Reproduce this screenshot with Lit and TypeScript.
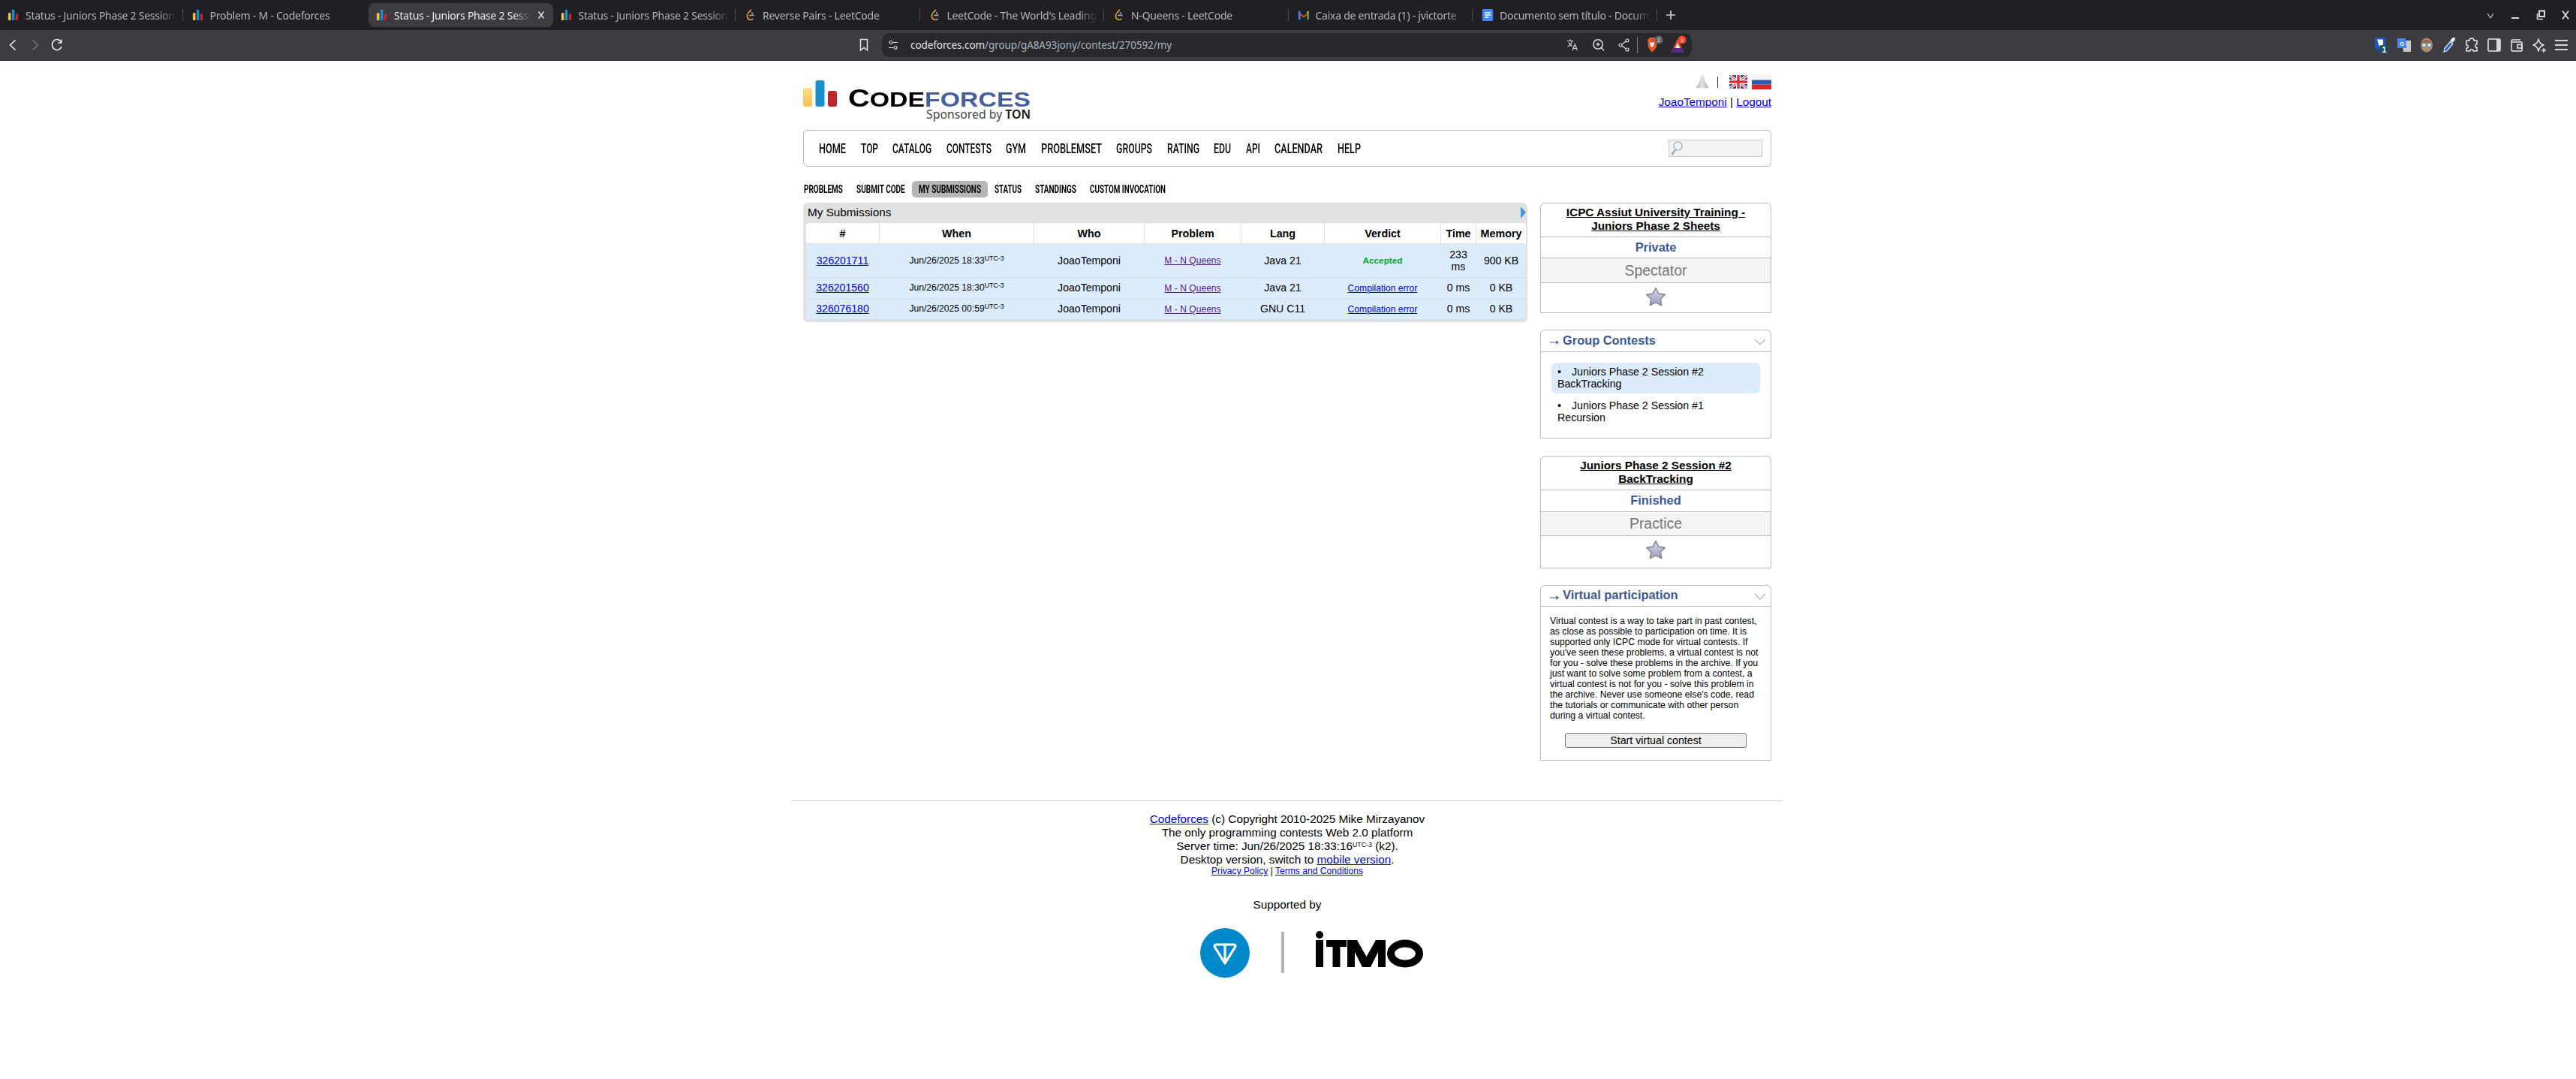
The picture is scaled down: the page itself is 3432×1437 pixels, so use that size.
import { LitElement, html, css, svg } from "lit";
import { customElement } from "lit/decorators.js";

const ctx = document.createElement("canvas").getContext("2d")!;
const measure = (t: string, font: string) => {
  ctx.font = font;
  return ctx.measureText(t).width;
};
const NAV_FONT = '500 18px Roboto';
const SUB_FONT = 'bold 14px Roboto';

const cfIcon = svg`<rect x="1" y="6" width="4" height="11" rx="1" fill="#f6c344"/><rect x="6.500" y="1" width="4" height="16" rx="1" fill="#1a8fd0"/><rect x="12" y="7" width="4" height="10" rx="1" fill="#c0272d"/>`;
const lcIcon = svg`<path d="M10 1 5 6.500M5 7c-2.500 3-1 7 2 9h4" fill="none" stroke="#e8a33a" stroke-width="1.800"/><path d="M7 9.500h7" stroke="#b3b3b3" stroke-width="1.800"/><path d="M10 5l3 2.500M11 16l2-1.500" stroke="#e0e0e0" stroke-width="1.200"/>`;
const gmIcon = svg`<path d="M1 4.500 9 10l8-5.500V7l-8 6-8-6z" fill="#ea4335"/><path d="M1 4.500a1.500 1.500 0 0 1 3-.5v12H2a1 1 0 0 1-1-1z" fill="#4285f4"/><path d="M14 16V4a1.500 1.500 0 0 1 3 .5V15a1 1 0 0 1-1 1z" fill="#34a853"/><path d="M14 4l3 .5L14 7z" fill="#fbbc04"/>`;
const docIcon = svg`<rect x="1" y="0" width="16" height="18" rx="2" fill="#4285f4"/><path d="M4.500 5.500h9M4.500 9h9M4.500 12.500h6" stroke="#fff" stroke-width="1.700"/>`;

const TABS = [
  { t: "Status - Juniors Phase 2 Session", i: cfIcon },
  { t: "Problem - M - Codeforces", i: cfIcon },
  { t: "Status - Juniors Phase 2 Session", i: cfIcon, active: true },
  { t: "Status - Juniors Phase 2 Session", i: cfIcon },
  { t: "Reverse Pairs - LeetCode", i: lcIcon },
  { t: "LeetCode - The World's Leading", i: lcIcon },
  { t: "N-Queens - LeetCode", i: lcIcon },
  { t: "Caixa de entrada (1) - jvictorte", i: gmIcon },
  { t: "Documento sem título - Docum", i: docIcon },
];

const NAV: [string, number][] = [
  ["HOME", 36], ["TOP", 23], ["CATALOG", 52], ["CONTESTS", 60], ["GYM", 27], ["PROBLEMSET", 81],
  ["GROUPS", 48], ["RATING", 43], ["EDU", 23], ["API", 19], ["CALENDAR", 64], ["HELP", 31],
];
const SUB: [string, number, boolean?][] = [
  ["PROBLEMS", 52], ["SUBMIT CODE", 65], ["MY SUBMISSIONS", 83, true], ["STATUS", 36], ["STANDINGS", 55], ["CUSTOM INVOCATION", 101],
];

const ROWS = [
  { id: "326201711", when: "Jun/26/2025 18:33", lang: "Java 21", ok: true, time: "233 ms", mem: "900 KB" },
  { id: "326201560", when: "Jun/26/2025 18:30", lang: "Java 21", ok: false, time: "0 ms", mem: "0 KB" },
  { id: "326076180", when: "Jun/26/2025 00:59", lang: "GNU C11", ok: false, time: "0 ms", mem: "0 KB" },
];

const star = svg`<svg class="star" viewBox="0 0 28 26"><defs><linearGradient id="sg" x1="0" y1="0" x2="0" y2="1"><stop offset="0" stop-color="#d8d8e2"/><stop offset="1" stop-color="#9c9cc6"/></linearGradient></defs><path d="M14 1.500l3.900 7.600 8.400 1.300-6 5.900 1.400 8.300L14 20.700l-7.700 3.900 1.400-8.300-6-5.900 8.400-1.300z" fill="url(#sg)" stroke="#8a8a92" stroke-width="1.600" stroke-linejoin="round"/></svg>`;
const chevron = svg`<svg class="chev" width="16" height="10" viewBox="0 0 16 10"><path d="M1 1l7 7 7-7" fill="none" stroke="#aab0b8" stroke-width="1.200"/></svg>`;
const arrow = svg`<svg class="ar" width="18" height="8" viewBox="0 0 18 8"><path d="M1 4h10M9 2l3 2-3 2" fill="none" stroke="#3b5998" stroke-width="1.100"/></svg>`;

@customElement("app-root")
export class AppRoot extends LitElement {
  static styles = css`
    :host { display: block; height: 1437px; background: #fff; color: #000; font-family: "Liberation Sans", Arial, sans-serif; overflow: hidden; }
    a { color: #0000ee; }
    .tabbar { height: 40px; background: #1f1f24; display: flex; align-items: flex-start; box-sizing: border-box; padding: 4px 0 0 0; }
    .tab { width: 245.500px; height: 32px; flex: none; box-sizing: border-box; padding: 0 11px 0 10px; display: flex; align-items: center; gap: 8px; color: #b6b6ba; font: 14px "Noto Sans", sans-serif; position: relative; }
    .tab.active { background: #3c3c42; border-radius: 8px; color: #ececec; padding-right: 10px; }
    .tab svg { width: 16px; height: 18px; flex: none; }
    .tab span { flex: 1; overflow: hidden; white-space: nowrap; -webkit-mask-image: linear-gradient(90deg, #000 88%, transparent); mask-image: linear-gradient(90deg, #000 88%, transparent); letter-spacing: -0.25px; }
    .tab .x { width: 12px; height: 12px; }
    .tab.sep::after { content: ""; position: absolute; right: 2px; top: 8px; height: 16px; width: 1px; background: #4a4a50; }
    .plus { width: 14px; height: 14px; margin: 9px 0 0 9px; flex: none; }
    .winctl { margin-left: auto; display: flex; align-items: center; gap: 19.500px; height: 32px; padding-right: 7px; }
    .winctl svg { width: 14px; height: 14px; display: block; }
    .toolbar { height: 41px; background: #3c3c42; border-bottom: 1px solid #26262a; box-sizing: border-box; display: flex; align-items: center; padding: 0 0 0 11px; }
    .toolbar svg { display: block; }
    .nav-ic { display: flex; gap: 18px; align-items: center; width: 1164px; flex: none; }
    .nav-ic .rl { margin-left: -3px; }
    .nav-ic .bm { margin-left: auto; margin-right: 17px; }
    .addr { width: 1079px; height: 32px; background: #28282d; border-radius: 10px; box-sizing: border-box; display: flex; align-items: center; padding: 0 6px 0 8px; color: #a9b3bd; font: 13.500px "Noto Sans", sans-serif; letter-spacing: -0.08px; flex: none; }
    .addr .h { color: #e6e6e6; }
    .addr .tune { margin-right: 16px; }
    .addr .right { margin-left: auto; display: flex; align-items: center; gap: 18px; }
    .addr .vsep { width: 1px; height: 22px; background: #77777c; margin: 0 -8px; }
    .addr .bat { margin-left: -10px; }
    .exts { margin-left: auto; display: flex; align-items: center; gap: 10px; padding-right: 9px; }
    .exts svg { width: 20px; height: 24px; }

    .page { width: 1290px; margin: 0 auto; transform: translateX(-1px); }
    .head { display: flex; justify-content: space-between; height: 92px; box-sizing: border-box; padding-top: 26px; }
    .logo { display: flex; gap: 15px; height: 54px; }
    .logo svg { width: 45px; height: 35px; display: block; }
    .logo-col { width: 243px; }
    .logo-txt { margin-top: 10px; height: 27px; font: 700 28px/27px "Liberation Sans", sans-serif; white-space: nowrap; transform-origin: 0 50%; }
    .logo-txt .c { font-size: 33px; }
    .logo-txt .f { color: #45609d; }
    .spons { font: 15.800px/17px "Noto Sans", sans-serif; color: #444; text-align: right; white-space: nowrap; }
    .spons b { color: #111; font-weight: 600; }
    .who { text-align: right; font-size: 15.300px; margin-top: -7px; }
    .icons { display: flex; justify-content: flex-end; align-items: center; height: 18px; margin-bottom: 9px; gap: 6px; }
    .icons svg { display: block; }
    .pipe { width: 1px; height: 15px; background: #222; margin: 0 9px 0 5px; }
    .menu { height: 49px; border: 1px solid #b9b9b9; border-radius: 6px; box-sizing: border-box; display: flex; align-items: center; padding: 0 11px 0 20px; }
    .menu .items { display: flex; gap: 19.500px; }
    .ni { display: block; height: 20px; white-space: nowrap; color: #000; font: 500 18px/20px Roboto, sans-serif; }
    .ni span, .si span { display: block; width: max-content; transform-origin: 0 50%; }
    .search { margin-left: auto; width: 125px; height: 23px; box-sizing: border-box; background: #f2f2f2; border: 1px solid #c8c8c8; display: flex; align-items: center; padding-left: 1px; }
    .sub { display: flex; margin: 19px 0 7px; height: 22px; align-items: center; }
    .si { box-sizing: content-box; padding: 0 9px; height: 22px; font: 700 14px/22px Roboto, sans-serif; color: #000; white-space: nowrap; border-radius: 5px; }
    .si:first-child { padding-left: 1px; }
    .si.on { background: #b5b5b5; }
    .cols { display: flex; justify-content: space-between; align-items: flex-start; }
    .panel { width: 965px; background: #e1e1e1; border-radius: 6px; padding: 0 2px 3px 4px; box-sizing: border-box; }
    .ptitle { height: 27px; font-size: 15.300px; line-height: 26px; padding-left: 2px; display: flex; justify-content: space-between; align-items: flex-start; }
    .ptitle svg { margin-top: 5px; }
    table { border-collapse: separate; border-spacing: 0; width: 959px; table-layout: fixed; background: #fff; border-radius: 4px 4px 0 0; }
    th { height: 28px; font-size: 14.300px; padding: 0; font-weight: 700; border-right: 1px solid #e1e1e1; border-bottom: 1px solid #e1e1e1; box-sizing: border-box; }
    td { background: #dcecfc; border-right: 1px solid #e1e8f0; border-bottom: 1px solid #d9dfe6; font-size: 14.100px; text-align: center; padding: 0 3px; line-height: 16.500px; box-sizing: border-box; }
    th:last-child, td:last-child { border-right: 0; }
    td.sm { font-size: 12.100px; }
    td a.p { color: #551a8b; font-size: 12.100px; }
    td a.v { font-size: 12.100px; }
    td a.id { font-size: 14.100px; }
    sup { font-size: 8.800px; line-height: 0; vertical-align: 4.500px; }
    tr.r1 td { height: 45px; }
    tr.r2 td { height: 28px; }
    .ok { color: #00a92d; font-weight: 700; font-size: 11.800px; }
    .side { width: 308px; display: flex; flex-direction: column; }
    .box { border: 1px solid #b9b9b9; border-radius: 6px 6px 0 0; box-sizing: border-box; width: 308px; margin-bottom: 22px; text-align: center; }
    .box.m23 { margin-bottom: 23px; }
    .box .t { font-weight: 700; font-size: 15.300px; line-height: 18px; padding: 3px 12px 0; height: 44px; box-sizing: border-box; }
    .box .t a { color: #000; }
    .box .s1 { border-top: 1px solid #b9b9b9; color: #3b5998; font-weight: 700; font-size: 16.400px; line-height: 27px; height: 28px; box-sizing: border-box; }
    .box .s2 { border-top: 1px solid #b9b9b9; background: #f4f4f4; color: #777; font-size: 19.400px; line-height: 32px; height: 33px; box-sizing: border-box; }
    .box .s3 { border-top: 1px solid #b9b9b9; height: 40px; padding-bottom: 3px; display: flex; justify-content: center; align-items: center; box-sizing: border-box; }
    .box .tall { height: 29px; }
    .box .short { height: 32px; line-height: 31px; }
    .box .big { height: 43px; padding-bottom: 6px; }
    .star { width: 28px; height: 26px; display: block; margin-left: -1px; }
    .bh { height: 29px; box-sizing: border-box; border-bottom: 1px solid #b9b9b9; display: flex; align-items: center; padding: 0 6px 2px 11px; color: #3b5998; font-weight: 700; font-size: 16.400px; text-align: left; }
    .bh.h28 { height: 28px; }
    .bh .ar { flex: none; margin-top: 6px; }
    .bh .chev { margin-left: auto; margin-top: 5px; }
    .gc { padding: 14px 14px 0; text-align: left; font-size: 14.200px; line-height: 16px; height: 114px; box-sizing: border-box; }
    .gi { padding: 4px 8px 5px; border-radius: 6px; margin-bottom: 4px; height: 41px; box-sizing: border-box; }
    .gi.on { background: #dcecfc; }
    .gi i { font-style: normal; display: inline-block; width: 19px; }
    .vp { padding: 12px 12px 0; text-align: left; font-size: 12.250px; line-height: 14px; height: 204px; box-sizing: border-box; }
    .vb { display: flex; justify-content: center; margin-top: 16px; }
    .vb button { width: 242px; height: 20px; background: #efefef; border: 1px solid #767676; border-radius: 3px; font: 14.200px "Liberation Sans", sans-serif; color: #000; padding: 0; box-sizing: border-box; }
    .foot { margin: 31px -15px 0; border-top: 1px solid #d0d0d0; padding-top: 15px; text-align: center; font-size: 15.300px; line-height: 18px; }
    .foot .sm { font-size: 12.100px; line-height: 13px; }
    .foot .sup { margin-top: 29px; }
    .logos { display: flex; justify-content: center; align-items: flex-start; margin-top: 22px; padding-left: 64px; }
    .logos svg { display: block; flex: none; }
    .logos .itmo { margin: 4px 0 0 -16px; }
  `;

  private flagUK() {
    return svg`<svg width="24" height="18" viewBox="0 0 24 18"><rect width="24" height="18" fill="#3a4a8c"/><path d="M0 0l24 18M24 0L0 18" stroke="#fff" stroke-width="3.600"/><path d="M0 0l24 18M24 0L0 18" stroke="#d8424a" stroke-width="1.200"/><path d="M12 0v18M0 9h24" stroke="#fff" stroke-width="6"/><path d="M12 0v18M0 9h24" stroke="#d8323c" stroke-width="3.400"/></svg>`;
  }
  private flagRU() {
    return svg`<svg width="26" height="19" viewBox="0 0 26 19"><rect width="26" height="6.500" fill="#f4f4f4"/><rect y="6.500" width="26" height="6.200" fill="#2f57b8"/><rect y="12.700" width="26" height="6.300" fill="#e0242c"/></svg>`;
  }

  render() {
    const logoW = measure("C", 'bold 33px "Liberation Sans"') + measure("ODEFORCES", 'bold 28px "Liberation Sans"');
    return html`
      <div class="tabbar">
        ${TABS.map((t, i) => html`<div class="tab ${t.active ? "active" : ""} ${!t.active && i !== 1 ? "sep" : ""}">
          <svg viewBox="0 0 18 18">${t.i}</svg><span>${t.t}</span>
          ${t.active ? html`<svg class="x" viewBox="0 0 12 12"><path d="M2.500 1.500l7 9M9.500 1.500l-7 9" stroke="#eee" stroke-width="1.400"/></svg>` : ""}
        </div>`)}
        <svg class="plus" viewBox="0 0 14 14"><path d="M7 1v12M1 7h12" stroke="#cfcfcf" stroke-width="1.700"/></svg>
        <div class="winctl">
          <svg viewBox="0 0 14 14"><path d="M3 5l4 6 4-6" fill="none" stroke="#ccc" stroke-width="1.200"/></svg>
          <svg viewBox="0 0 14 14"><path d="M2 11h10" stroke="#ddd" stroke-width="2"/></svg>
          <svg viewBox="0 0 14 14"><path d="M2.500 5v7.500H10" fill="none" stroke="#ddd" stroke-width="1.600"/><rect x="5" y="1.500" width="7" height="7.500" fill="none" stroke="#ddd" stroke-width="2"/></svg>
          <svg viewBox="0 0 14 14"><path d="M3 1.500l8 11M11 1.500l-8 11" stroke="#ddd" stroke-width="1.800"/></svg>
        </div>
      </div>
      <div class="toolbar">
        <div class="nav-ic">
          <svg width="12" height="18" viewBox="0 0 12 18"><path d="M9.500 2.500L2.500 9l7 6.500" fill="none" stroke="#eee" stroke-width="1.600"/></svg>
          <svg width="12" height="18" viewBox="0 0 12 18"><path d="M2.500 2.500L9.500 9l-7 6.500" fill="none" stroke="#77777c" stroke-width="1.600"/></svg>
          <svg class="rl" width="16" height="18" viewBox="0 0 16 18"><path d="M13.500 5A6.500 7 0 1 0 14 11" fill="none" stroke="#eee" stroke-width="1.600"/><path d="M14 1.500V6H9.500" fill="none" stroke="#eee" stroke-width="1.400"/></svg>
          <svg class="bm" width="14" height="18" viewBox="0 0 14 18"><path d="M2.500 1.500h9v14.500L7 12.500 2.500 16z" fill="none" stroke="#e6e6e6" stroke-width="1.500"/></svg>
        </div>
        <div class="addr">
          <svg class="tune" width="14" height="16" viewBox="0 0 14 16"><circle cx="4" cy="4.500" r="2" fill="none" stroke="#ddd" stroke-width="1.200"/><path d="M7 4.500h6M1 11.500h6" stroke="#ddd" stroke-width="1.200"/><circle cx="10" cy="11.500" r="2" fill="none" stroke="#ddd" stroke-width="1.200"/></svg>
          <span><span class="h">codeforces.com</span>/group/gA8A93jony/contest/270592/my</span>
          <div class="right">
            <svg width="16" height="18" viewBox="0 0 16 18"><path d="M1 3.500h8M5 1.500v2M7.500 3.500C7 7 4 10 1.500 11M3 5.500c1 2.500 3 4.500 5 5.500M8 16l3.200-8 3.300 8M9 13.500h4.500" fill="none" stroke="#ddd" stroke-width="1.200"/></svg>
            <svg width="17" height="18" viewBox="0 0 17 18"><circle cx="8" cy="8" r="6.200" fill="none" stroke="#ddd" stroke-width="1.500"/><path d="M12.500 12.500l3.500 4M5.500 8h5M8 5.500v5" stroke="#ddd" stroke-width="1.400"/></svg>
            <svg width="15" height="18" viewBox="0 0 15 18"><circle cx="12" cy="3" r="2" fill="none" stroke="#ddd" stroke-width="1.200"/><circle cx="3" cy="9" r="2" fill="none" stroke="#ddd" stroke-width="1.200"/><circle cx="12" cy="15" r="2" fill="none" stroke="#ddd" stroke-width="1.200"/><path d="M4.800 8l5.500-4M4.800 10l5.500 4" stroke="#ddd" stroke-width="1.200"/></svg>
            <div class="vsep"></div>
            <svg width="24" height="26" viewBox="0 0 24 26"><path d="M3 6l3-3h6l1 0 3 3-1 10-6 7-5-7z" fill="#e8552c"/><path d="M6 9l3 1 3-1-1 5-2 2-2-2z" fill="#fff"/><circle cx="18" cy="6" r="5.500" fill="#63636a"/><text x="18" y="8.500" font-size="7" fill="#eee" text-anchor="middle" font-family="Liberation Sans">2</text></svg>
            <svg class="bat" width="24" height="26" viewBox="0 0 24 26"><path d="M11 5L2 23h18z" fill="#5b2a86"/><path d="M11 5L5.500 17h11z" fill="#e8552c"/><path d="M11 10.500l-3 6.500h6z" fill="#fff"/><circle cx="17" cy="6" r="5.500" fill="#f2482c"/><text x="17" y="8.500" font-size="7" fill="#fff" text-anchor="middle" font-family="Liberation Sans">1</text></svg>
          </div>
        </div>
        <div class="exts">
          <svg viewBox="0 0 20 24"><path d="M1 3a1 1 0 0 1 1-1h12a1 1 0 0 1 1 1v10c0 3-3 5-7 7-4-2-7-4-7-7z" fill="#1a56c4"/><path d="M4 4.500h8V13c0 1.500-2 3-4 4z" fill="#fff"/><rect x="7" y="12" width="13" height="12" rx="3" fill="#1f4d61"/><text x="13.500" y="22" font-size="10.500" font-weight="700" fill="#fff" text-anchor="middle" font-family="Liberation Sans">1</text></svg>
          <svg viewBox="0 0 20 24"><path d="M7 6h12v15H9z" fill="#c9c9c9"/><path d="M1 3h11l1 13H1z" fill="#4285f4"/><text x="7" y="13" font-size="8" font-weight="700" fill="#fff" text-anchor="middle" font-family="Liberation Sans">G</text></svg>
          <svg viewBox="0 0 20 24"><ellipse cx="10" cy="12" rx="8" ry="9.500" fill="#b08a6c"/><path d="M3 9c1-5 12-6 14 0z" fill="#a06a48"/><circle cx="6.500" cy="12" r="3" fill="#c6e4e8" stroke="#667" stroke-width=".8"/><circle cx="13.500" cy="12" r="3" fill="#c6e4e8" stroke="#667" stroke-width=".8"/></svg>
          <svg viewBox="0 0 20 24"><path d="M3 21l.8-4.500 7.500-9 3.500 3-7.500 9z" fill="#2c63d4" stroke="#eee" stroke-width="1.200"/><path d="M11 6l3.500-3.500a2 2 0 0 1 3 3L14.500 9z" fill="#eee"/></svg>
          <svg viewBox="0 0 20 24"><path d="M7 6c0-4 6-4 6 0h4v5c-3-1-3 5 0 4v5h-5c1-3-5-3-4 0H3v-4c3 1 3-5 0-4V6z" fill="none" stroke="#e8e8e8" stroke-width="1.500" stroke-linejoin="round"/></svg>
          <svg viewBox="0 0 20 24"><rect x="2" y="4" width="16" height="16" rx="1.500" fill="none" stroke="#e8e8e8" stroke-width="1.600"/><rect x="13" y="4" width="5" height="16" fill="#d8d8d8"/></svg>
          <svg viewBox="0 0 20 24"><path d="M3 8h13a1 1 0 0 1 1 1v10a1 1 0 0 1-1 1H4a1 1 0 0 1-1-1V7a2 2 0 0 1 2-2h10" fill="none" stroke="#e8e8e8" stroke-width="1.500"/><rect x="11" y="11.500" width="6" height="4.500" fill="none" stroke="#e8e8e8" stroke-width="1.500"/></svg>
          <svg viewBox="0 0 20 24"><path d="M9 4c1 5 3 7 7 8-4 1-6 3-7 8-1-5-3-7-7-8 4-1 6-3 7-8z" fill="none" stroke="#e8e8e8" stroke-width="1.500" stroke-linejoin="round"/><path d="M16 16v6M13 19h6" stroke="#e8e8e8" stroke-width="1.500"/></svg>
          <svg viewBox="0 0 20 24"><path d="M1 6h17M1 12h17M1 18h17" stroke="#d8d8d8" stroke-width="2"/></svg>
        </div>
      </div>

      <div class="page">
        <div class="head">
          <div class="logo">
            <svg viewBox="0 0 45 35"><defs><linearGradient id="yl" x1="0" y1="0" x2="0" y2="1"><stop offset="0" stop-color="#f8dc94"/><stop offset="1" stop-color="#f6c344"/></linearGradient></defs><rect x="0" y="10" width="12" height="25" rx="3" fill="url(#yl)"/><rect x="16.500" y="0" width="12" height="35" rx="3" fill="#1a8fd0"/><rect x="33" y="14" width="12" height="21" rx="3" fill="#c0272d"/></svg>
            <div class="logo-col">
              <div class="logo-txt" style="transform:scaleX(${243 / logoW})"><span class="c">C</span>ODE<span class="f">FORCES</span></div>
              <div class="spons">Sponsored by <b>TON</b></div>
            </div>
          </div>
          <div class="who">
            <div class="icons">
              <svg width="18" height="18" viewBox="0 0 18 18"><defs><linearGradient id="bl" x1="0" x2="1"><stop offset="0" stop-color="#b4b4b4"/><stop offset=".5" stop-color="#e4e4e4"/><stop offset="1" stop-color="#a8a8a8"/></linearGradient></defs><path d="M9 0c1.500 0 2 1 2 2 0 3 2 8 5 13H2C5 10 7 5 7 2c0-1 .5-2 2-2zM1 15h16v2H1z" fill="url(#bl)"/></svg>
              <div class="pipe"></div>
              ${this.flagUK()}
              ${this.flagRU()}
            </div>
            <a href="#">JoaoTemponi</a> | <a href="#">Logout</a>
          </div>
        </div>
        <div class="menu">
          <div class="items">${NAV.map(([n, w]) => html`<a class="ni" style="width:${w}px"><span style="transform:scaleX(${w / measure(n, NAV_FONT)})">${n}</span></a>`)}</div>
          <div class="search"><svg width="18" height="21" viewBox="0 0 18 21"><circle cx="10.500" cy="7.500" r="5.500" fill="#eef3f7" stroke="#b4b4b4" stroke-width="1.400"/><path d="M7 12.500L2.500 19" stroke="#a8a8a8" stroke-width="2.400"/></svg></div>
        </div>
        <div class="sub">${SUB.map(([n, w, on]) => html`<a class="si ${on ? "on" : ""}" style="width:${w}px"><span style="transform:scaleX(${w / measure(n, SUB_FONT)})">${n}</span></a>`)}</div>
        <div class="cols">
          <div class="panel">
            <div class="ptitle"><span>My Submissions</span><svg width="7" height="16" viewBox="0 0 7 16"><path d="M0 0l7 8-7 8z" fill="#3f93d6"/></svg></div>
            <table>
              <colgroup><col style="width:98px"/><col style="width:206px"/><col style="width:147px"/><col style="width:129px"/><col style="width:111px"/><col style="width:155px"/><col style="width:47px"/><col/></colgroup>
              <thead><tr><th>#</th><th>When</th><th>Who</th><th>Problem</th><th>Lang</th><th>Verdict</th><th>Time</th><th>Memory</th></tr></thead>
              <tbody>
                ${ROWS.map((r, i) => html`<tr class="${i === 0 ? "r1" : "r2"}">
                  <td><a class="id" href="#">${r.id}</a></td>
                  <td class="sm">${r.when}<sup>UTC-3</sup></td>
                  <td>JoaoTemponi</td>
                  <td><a class="p" href="#">M - N Queens</a></td>
                  <td>${r.lang}</td>
                  <td>${r.ok ? html`<span class="ok">Accepted</span>` : html`<a class="v" href="#">Compilation error</a>`}</td>
                  <td>${r.time}</td>
                  <td>${r.mem}</td>
                </tr>`)}
              </tbody>
            </table>
          </div>
          <div class="side">
            <div class="box">
              <div class="t"><a href="#">ICPC Assiut University Training - Juniors Phase 2 Sheets</a></div>
              <div class="s1">Private</div>
              <div class="s2">Spectator</div>
              <div class="s3">${star}</div>
            </div>
            <div class="box m23">
              <div class="bh">${arrow}Group Contests${chevron}</div>
              <div class="gc">
                <div class="gi on"><i>•</i>Juniors Phase 2 Session #2 BackTracking</div>
                <div class="gi"><i>•</i>Juniors Phase 2 Session #1 Recursion</div>
              </div>
            </div>
            <div class="box">
              <div class="t"><a href="#">Juniors Phase 2 Session #2 BackTracking</a></div>
              <div class="s1 tall">Finished</div>
              <div class="s2 short">Practice</div>
              <div class="s3 big">${star}</div>
            </div>
            <div class="box">
              <div class="bh h28">${arrow}Virtual participation${chevron}</div>
              <div class="vp">
                Virtual contest is a way to take part in past contest, as close as possible to participation on time. It is supported only ICPC mode for virtual contests. If you've seen these problems, a virtual contest is not for you - solve these problems in the archive. If you just want to solve some problem from a contest, a virtual contest is not for you - solve this problem in the archive. Never use someone else's code, read the tutorials or communicate with other person during a virtual contest.
                <div class="vb"><button>Start virtual contest</button></div>
              </div>
            </div>
          </div>
        </div>
        <div class="foot">
          <div><a href="#">Codeforces</a> (c) Copyright 2010-2025 Mike Mirzayanov</div>
          <div>The only programming contests Web 2.0 platform</div>
          <div>Server time: Jun/26/2025 18:33:16<sup>UTC-3</sup> (k2).</div>
          <div>Desktop version, switch to <a href="#">mobile version</a>.</div>
          <div class="sm"><a href="#">Privacy Policy</a> | <a href="#">Terms and Conditions</a></div>
          <div class="sup">Supported by</div>
          <div class="logos">
            <svg width="170" height="66" viewBox="0 0 170 66"><circle cx="33" cy="33" r="33" fill="#0088cc"/><path d="M21 22h24a2 2 0 0 1 1.700 3L33 47 19.300 25A2 2 0 0 1 21 22zM33 22v25" fill="none" stroke="#fff" stroke-width="3.200" stroke-linejoin="round"/><rect x="108" y="5" width="4" height="55" fill="#b3b3b3"/></svg>
            <svg class="itmo" width="143" height="50" viewBox="0 0 143 50"><circle cx="5" cy="5" r="5" fill="#000"/><rect x="0" y="12" width="10" height="36" fill="#000"/><path d="M14 12h27v9H32.500v27h-10V21H14z" fill="#000"/><path d="M42 12h13l12.500 22L80 12h13v36H83V28l-10 20H62L52 28v20H42z" fill="#000"/><ellipse cx="119" cy="30" rx="19" ry="13.500" fill="none" stroke="#000" stroke-width="10"/></svg>
          </div>
        </div>
      </div>
    `;
  }
}
